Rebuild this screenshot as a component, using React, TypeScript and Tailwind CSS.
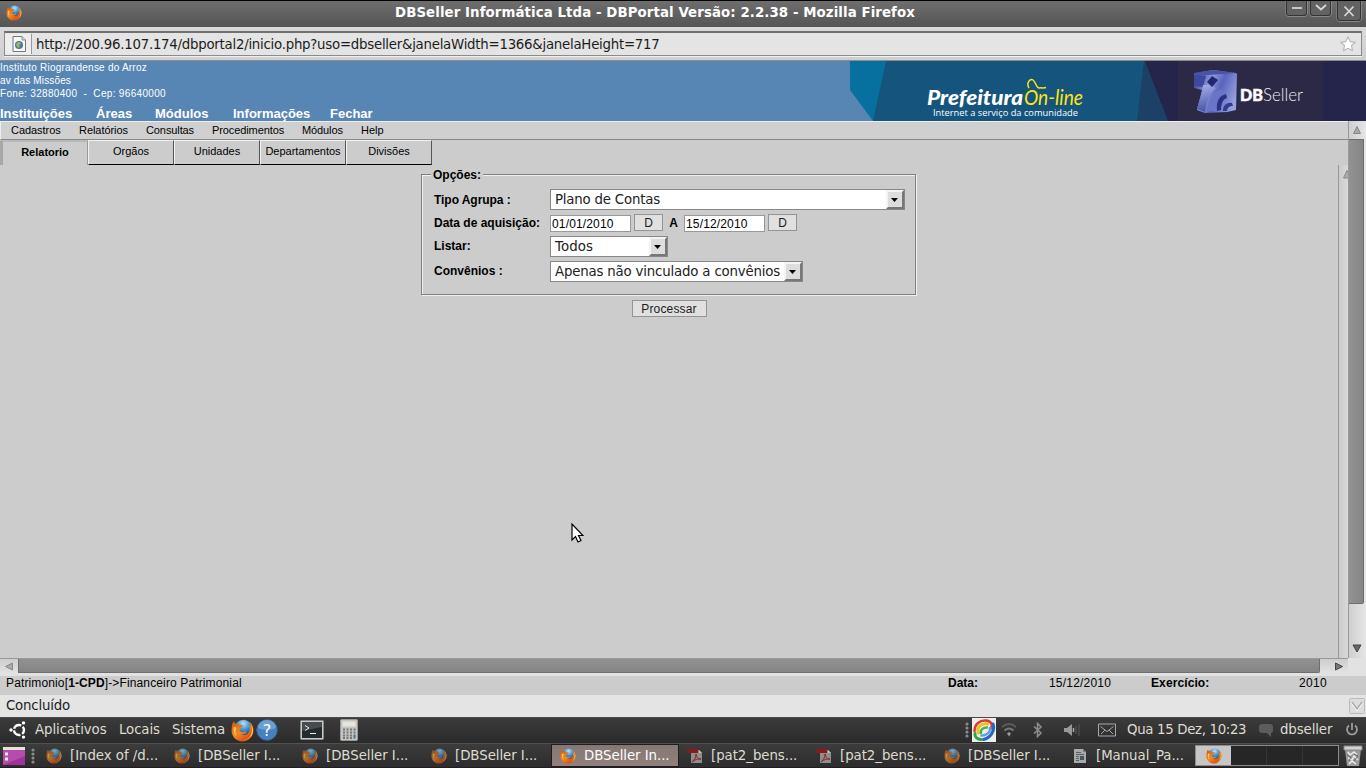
import React from "react";

function Firefox({ size = 16, dim = false }: { size?: number; dim?: boolean }) {
  return (
    <svg width={size} height={size} viewBox="0 0 16 16" className="shrink-0" opacity={dim ? 0.65 : 1}>
      <defs>
        <radialGradient id="ffGlobe" cx="0.5" cy="0.2" r="0.8">
          <stop offset="0" stopColor="#b5e4fa" />
          <stop offset="0.45" stopColor="#3b8ed0" />
          <stop offset="1" stopColor="#12266b" />
        </radialGradient>
        <linearGradient id="ffFox" x1="0" y1="0" x2="0.7" y2="1">
          <stop offset="0" stopColor="#d4521a" />
          <stop offset="0.55" stopColor="#f08a24" />
          <stop offset="1" stopColor="#d8420e" />
        </linearGradient>
      </defs>
      <circle cx="8.600" cy="7" r="6.400" fill="url(#ffGlobe)" />
      <path d="M1 3.200 2 1.600 3.200 3.400C4.400 3 5.300 3.300 6 4l2.400.4c.1 1.200-.9 1.600-1.700 2L5.900 8c.6 1 1.700 1.400 2.900 1 .9-.4 1.700-.3 2 .3-.8 1.200-2.300 1.700-3.900 1.300 2.200 1.300 5 .3 5.900-2 .5-1.600.3-3.200-.4-4.800 1 .6 1.300 1.200 1.500 2.100.1-1.500-.5-3-1.500-4.200 2.300 1.400 3.400 3.800 3.200 6.400-.3 4.200-3.600 7.500-7.700 7.500C3.600 15.600.4 12.200.4 8c0-1.700.2-3.300.6-4.800Z" fill="url(#ffFox)" />
      <path d="M14.400 5.200c1.200 4-1 8.700-5.400 9.600 3.300-.3 6.600-3.300 6.400-7.200-.1-.9-.5-1.700-1-2.400ZM2 5.600C1.300 8 2 10.500 3.600 12 2.800 9.800 3 7.600 4 6Z" fill="#ffce3d" />
    </svg>
  );
}

function Pdf() {
  return (
    <svg width="16" height="16" viewBox="0 0 16 16" className="shrink-0">
      <path d="M4 2h8l3 3v10H4z" fill="#8e8e8e" />
      <path d="m12 2 3 3h-3z" fill="#c0c0c0" />
      <path d="M0 1h11v4H0z" fill="#8b1a1f" />
      <path d="M5 14c2-2 4.500-5 4-8 .5 3.500 2.500 5.500 5 5-3-.5-6 .5-9 3Z" fill="none" stroke="#8b2226" />
    </svg>
  );
}

function Doc() {
  return (
    <svg width="16" height="16" viewBox="0 0 16 16" className="shrink-0">
      <path d="M2 1h9l3 3v11H2z" fill="#a9a9a9" />
      <path d="m11 1 3 3h-3z" fill="#747474" />
      <path d="M4 4.500h5M4 6.500h8M4 8.500h3M4 10.500h3M4 12.500h3" stroke="#606060" />
      <path d="M8 8h4v4H8z" fill="#3f566d" />
    </svg>
  );
}

function Dots({ n }: { n: number }) {
  return (
    <svg width="4" height="16" viewBox="0 0 4 16" className="shrink-0">
      {Array.from({ length: n }, (_, i) => (
        <circle key={i} cx="2" cy={2 + i * (12 / (n - 1))} r="1.600" fill="#8a8a8a" />
      ))}
    </svg>
  );
}

function Select({ text, width, spacing }: { text: string; width: string; spacing: string }) {
  return (
    <div className={`flex h-[21px] border border-[#888] bg-white ${width}`}>
      <span className={`flex-1 whitespace-nowrap pl-1 font-['DejaVu_Sans'] text-[13.33px] leading-[19px] text-[#222] ${spacing}`}>{text}</span>
      <span className="flex h-[19px] w-[18px] shrink-0 items-center justify-center border-2 border-b-[#777] border-l-[#f4f4f4] border-r-[#777] border-t-[#f4f4f4] bg-[#ddd] pr-px">
        <svg width="7" height="4" viewBox="0 0 7 4"><path d="M0 0h7L3.500 4z" fill="#000" /></svg>
      </span>
    </div>
  );
}

const btn = "border border-[#949494] bg-[#e0e0e0] text-center text-[12px] text-[#1c1c1c]";
const dateBox = "h-[17px] w-[81px] border border-[#999] bg-white pl-px text-[12px] leading-[16px] tracking-[0.15px]";

function WinButton({ kind, className }: { kind: string; className: string }) {
  return (
    <div className={`flex justify-center rounded-b-[3px] border border-t-0 border-[#333] bg-[#626262] shadow-[0_1px_0_#888,1px_0_0_#888,-1px_0_0_#777] ${className}`}>
      <svg width="12" height="12" viewBox="0 0 12 12" fill="none" stroke="#d8d8d8" strokeWidth="1.700">
        {kind === "min" && <path d="M1 7h10" />}
        {kind === "down" && <path d="m1 4 5 4.500L11 4" />}
        {kind === "close" && <path d="m1.500 1.500 9 9.500M10.500 1.500l-9 9.500" />}
      </svg>
    </div>
  );
}

function Titlebar() {
  return (
    <div className="flex h-[27px] border-t border-black bg-linear-to-b from-[#6e6e6e] to-[#555]">
      <div className="w-[395px] pl-1.5 pt-1"><Firefox /></div>
      <div className="w-[891px] whitespace-nowrap font-['DejaVu_Sans'] text-[13.33px] font-bold leading-[24px] tracking-[0.09px] text-white">
        DBSeller Informática Ltda - DBPortal Versão: 2.2.38 - Mozilla Firefox
      </div>
      <WinButton kind="min" className="h-[15px] w-[21px]" />
      <WinButton kind="down" className="ml-[3px] h-[15px] w-[21px]" />
      <WinButton kind="close" className="ml-[6px] h-[20px] w-[24px] items-center" />
    </div>
  );
}

function Urlbar() {
  return (
    <div className="h-[34px] border-b border-[#8c8c8c] bg-linear-to-b from-[#dadada] to-[#cfcfcf] px-1 pt-1">
      <div className="flex h-[25px] items-center border border-t-2 border-[#8b8b8b] border-t-[#707070] bg-[#e4e4e4] shadow-[0_1px_0_#f2f2f2]">
        <div className="flex h-[20px] w-[27px] items-center justify-center border-r border-[#999] bg-[#eee] pl-px">
          <svg width="14" height="16" viewBox="0 0 14 16">
            <path d="M1 .5h9l3.500 3.500v11.500H1z" fill="#f7f7f7" stroke="#777" />
            <path d="M10 .5V4h3.500" fill="#ccc" stroke="#999" />
            <circle cx="7" cy="9" r="4" fill="#4778a8" />
            <path d="M5 6.500 8 6l1 2-2 1 1 2-2 1-2-3z" fill="#a0b84c" />
          </svg>
        </div>
        <span className="flex-1 whitespace-nowrap pl-[4px] pt-[2px] font-['DejaVu_Sans'] text-[13.33px] leading-[22px] tracking-[-0.25px] text-[#1c1c1c]">
          http://200.96.107.174/dbportal2/inicio.php?uso=dbseller&amp;janelaWidth=1366&amp;janelaHeight=717
        </span>
        <svg width="18" height="18" viewBox="0 0 18 18" className="mr-[4px]">
          <path d="m9 1.800 2.200 4.700 5.100.6-3.800 3.500 1 5.100L9 13.200l-4.500 2.500 1-5.100L1.700 7.100l5.100-.6z" fill="#fff" stroke="#bdbdbd" strokeWidth="1.300" strokeLinejoin="round" />
        </svg>
      </div>
    </div>
  );
}

function Banner() {
  return (
    <svg width="516" height="60" viewBox="0 0 516 60" className="shrink-0">
      <defs>
        <linearGradient id="cube" x1="0" x2="1" y1="0.2" y2="0.6">
          <stop offset="0" stopColor="#343d94" />
          <stop offset="0.35" stopColor="#8f9adb" />
          <stop offset="0.6" stopColor="#5964bd" />
          <stop offset="1" stopColor="#98a1dd" />
        </linearGradient>
        <linearGradient id="cubeSide" x1="0" x2="0.2" y1="0" y2="1">
          <stop offset="0" stopColor="#a9b3ea" />
          <stop offset="1" stopColor="#4a54ab" />
        </linearGradient>
      </defs>
      <path d="M0 0h516v60H23L0 29z" fill="#08709f" />
      <path d="M36 0h480v60H23z" fill="#15547c" />
      <path d="M294 0h222v60H287z" fill="#1d4166" />
      <path d="M295 0h221v60H318z" fill="#25244a" />
      <path d="M328 0h145v60H328z" fill="#2b2946" />
      <text x="77" y="43.500" textLength="96" lengthAdjust="spacingAndGlyphs" fontFamily="Lato" fontSize="20" fontWeight="900" fontStyle="italic" fill="#fff">Prefeitura</text>
      <text x="174" y="43.500" textLength="59" lengthAdjust="spacingAndGlyphs" fontFamily="Lato" fontSize="21" fontStyle="italic" fill="#ffe512">On-line</text>
      <path d="M179 27c-3-5 1-10 4-8 3 2 3 8 6 8 3-.5 4 .5 7-.5" fill="none" stroke="#ffe512" strokeWidth="1.500" />
      <text x="83" y="54.500" textLength="145" lengthAdjust="spacingAndGlyphs" fontFamily="Open Sans" fontSize="9.500" fill="#fff">Internet a serviço da comunidade</text>
      <path d="m344 12 19-3 23 3 1 1-1 36-9 2-22 1-8-3 5-20-8-2z" fill="url(#cube)" />
      <path d="m344 12 19-3 23 3-14 1-28 2z" fill="#4a53a8" />
      <path d="m344 14 12 1-3 11-9-1z" fill="#3f489e" />
      <path d="M353 24c-1 10-4 16-6 24l8 3c1-10 4-18 11-24l-7-3Z" fill="url(#cubeSide)" />
      <path d="m357 21 5-6 6 4-6 7z" fill="#22276f" />
      <path d="M358 50c0-9 3-17 11-21 3-2 6 1 7 4-6 2-9 7-9 17z" fill="#6a75c9" />
      <path d="M367 50c-1-10 2-15 9-17l1 4c-4 1-6 5-6 12z" fill="#2a3182" />
      <path d="M373 50c0-5 3-9 9-8l1 3c-4 0-6 2-6 5z" fill="#333b8f" />
      <text x="390" y="39.500" textLength="23" lengthAdjust="spacingAndGlyphs" fontFamily="Lato" fontSize="17" fontWeight="900" fill="#fff" stroke="#fff" strokeWidth="0.500">DB</text>
      <text x="413" y="39.500" textLength="40" lengthAdjust="spacingAndGlyphs" fontFamily="Lato" fontSize="18" fontWeight="300" fill="#ececf2">Seller</text>
    </svg>
  );
}

function Header() {
  return (
    <div className="flex h-[60px] bg-[#5786b4] text-white">
      <div className="w-[850px] whitespace-nowrap">
        <div className="h-[44px] text-[10px] leading-[13px]">
          <div className="tracking-[0.22px]">Instituto Riograndense do Arroz</div>
          <div className="tracking-[0.15px]">av das Missões</div>
          <div className="whitespace-pre tracking-[0.32px]">Fone: 32880400  -  Cep: 96640000</div>
        </div>
        <div className="flex text-[13px] font-bold leading-[17px]">
          <span className="w-[96px]">Instituições</span>
          <span className="w-[59px]">Áreas</span>
          <span className="w-[78px]">Módulos</span>
          <span className="w-[97px]">Informações</span>
          <span>Fechar</span>
        </div>
      </div>
      <Banner />
    </div>
  );
}

function Menubar() {
  return (
    <div className="flex h-[19px] shrink-0 whitespace-nowrap border-b border-l border-t border-b-[#888] border-l-[#eee] border-t-[#eee] bg-[#d0d0d0] pl-[10px] text-[11px] leading-[17px] text-black">
      <span className="w-[68px] tracking-[-0.05px]">Cadastros</span>
      <span className="w-[67px] tracking-[-0.05px]">Relatórios</span>
      <span className="w-[66px] tracking-[-0.1px]">Consultas</span>
      <span className="w-[90px] tracking-[-0.1px]">Procedimentos</span>
      <span className="w-[59px] tracking-[-0.1px]">Módulos</span>
      <span>Help</span>
    </div>
  );
}

function Tabs() {
  return (
    <div className="flex h-[25px] text-center text-[11px] text-black">
      <div className="w-[88px] border-l-[3px] border-r border-t-2 border-l-[#a8a8a8] border-r-[#999] border-t-[#b8b8b8] font-bold leading-[21px]">Relatorio</div>
      {["Orgãos", "Unidades", "Departamentos", "Divisões"].map((t) => (
        <div key={t} className="w-[86px] whitespace-nowrap border border-b-black border-l-[#f2f2f2] border-r-[#555] border-t-[#f2f2f2] leading-[21px]">{t}</div>
      ))}
    </div>
  );
}

function Form() {
  return (
    <div className="flex flex-1 flex-col items-center">
      <fieldset className="mr-px h-[130px] w-[495px] border border-[#808080] pl-[9px] shadow-[inset_1px_1px_0_#f0f0f0,1px_1px_0_#f0f0f0]">
        <legend className="bg-[#ccc] px-[2px] pt-px text-[12px] font-bold leading-[18px] text-black">Opções:</legend>
        <div className="grid grid-cols-[116px_1fr] pl-[3px] text-[12px] text-black">
          <b className="h-[25px] whitespace-nowrap pt-[7px] leading-[18px] tracking-[-0.05px]">Tipo Agrupa :</b>
          <div className="h-[25px] pt-[5px]"><Select text="Plano de Contas" width="w-[355px]" spacing="tracking-[-0.2px]" /></div>
          <b className="h-[22px] whitespace-nowrap pt-[5px] leading-[18px]">Data de aquisição:</b>
          <div className="flex h-[22px] items-start pt-[6px]">
            <span className={dateBox}>01/01/2010</span>
            <span className={`-mt-px ml-[3px] h-[17px] w-[29px] leading-[17px] ${btn}`}>D</span>
            <b className="w-[21px] text-center leading-[17px]">A</b>
            <span className={dateBox}>15/12/2010</span>
            <span className={`-mt-px ml-[3px] h-[17px] w-[29px] leading-[17px] ${btn}`}>D</span>
          </div>
          <b className="h-[25px] pt-[6px] leading-[18px]">Listar:</b>
          <div className="h-[25px] pt-[5px]"><Select text="Todos" width="w-[118px]" spacing="tracking-[0.1px]" /></div>
          <b className="h-[27px] pt-[6px] leading-[18px]">Convênios :</b>
          <div className="h-[27px] pt-[5px]"><Select text="Apenas não vinculado a convênios" width="w-[253px]" spacing="tracking-[-0.18px]" /></div>
        </div>
      </fieldset>
      <button className={`mt-[5px] h-[17px] w-[75px] leading-[16px] tracking-[0.15px] ${btn}`}>Processar</button>
    </div>
  );
}

function Scrollbars() {
  return (
    <div className="flex w-[18px] flex-col border-l border-[#999] bg-linear-to-r from-[#cfcfcf] to-[#e6e6e6]">
      <svg width="17" height="18" viewBox="0 0 17 18"><path d="M4.500 12.500 8 5.500 11.500 12.500z" fill="#a8a8a8" stroke="#888" /></svg>
      <div className="h-[465px] w-[15px] rounded-br-[2px] border border-l-0 border-[#6e6e6e] bg-linear-to-r from-[#929292] to-[#858585]" />
      <div className="flex-1" />
      <svg width="17" height="18" viewBox="0 0 17 18"><path d="M4 5h8L8 12z" fill="#666" stroke="#444" /></svg>
    </div>
  );
}

function HScroll() {
  return (
    <div className="flex h-[18px] border-b-[3px] border-[#e2e2e2] bg-[#e2e2e2]">
      <div className="flex h-[15px] w-[1348px] border-t border-[#999] bg-linear-to-b from-[#cdcdcd] to-[#e2e2e2]">
        <svg width="18" height="14" viewBox="0 0 18 14"><path d="M12.500 4v7L5.500 7.500z" fill="#aaa" stroke="#888" /></svg>
        <div className="h-[14px] w-[1302px] rounded-br-[2px] border border-t-0 border-[#6e6e6e] bg-linear-to-b from-[#919191] to-[#858585]" />
        <svg width="28" height="14" viewBox="0 0 28 14"><path d="M15.500 4v7l7-3.500z" fill="#777" stroke="#444" /></svg>
      </div>
    </div>
  );
}

function StatusRows() {
  return (
    <>
      <div className="flex h-[19px] whitespace-nowrap bg-[#ccc] pl-[6px] text-[12px] leading-[15px] text-black">
        <span className="w-[942px] tracking-[0.13px]">Patrimonio[<b>1-CPD</b>]-&gt;Financeiro Patrimonial</span>
        <b className="w-[101px]">Data:</b>
        <span className="w-[102px] tracking-[0.2px]">15/12/2010</span>
        <b className="w-[148px] tracking-[0.1px]">Exercício:</b>
        <span className="tracking-[0.3px]">2010</span>
      </div>
      <div className="flex h-[22px] items-center justify-between bg-[#e4e4e4] pl-[6px] pr-px font-['DejaVu_Sans'] text-[13.33px] leading-[20px] tracking-[-0.2px] text-[#222]">
        <span>Concluído</span>
        <svg width="16" height="16" viewBox="0 0 16 16" fill="none">
          <rect x=".5" y=".5" width="15" height="15" rx="1" fill="#ddd" stroke="#bbb" />
          <path d="m3 5 5 7L13 5" stroke="#fff" strokeWidth="2" />
          <path d="m3 4 5 7L13 4" stroke="#aaa" strokeWidth="1.500" />
        </svg>
      </div>
    </>
  );
}

function Panel() {
  return (
    <div className="flex h-[26px] items-center whitespace-nowrap border-t border-[#4a4a4a] bg-linear-to-b from-[#3b3b3b] to-[#2b2b2b] pb-px font-['DejaVu_Sans'] text-[13.33px] leading-[20px] text-[#dfdbd2]">
      <svg width="18" height="18" viewBox="0 0 18 18" className="ml-[9px] mr-[8px]" fill="none">
        <circle cx="10" cy="9" r="5" stroke="#fff" strokeWidth="2.400" strokeDasharray="8.700 1.770" strokeDashoffset="4.350" />
        <circle cx="2" cy="9" r="1.700" fill="#fff" />
        <circle cx="14.500" cy="1.900" r="1.700" fill="#fff" />
        <circle cx="14.500" cy="16.100" r="1.700" fill="#fff" />
      </svg>
      <span className="-mt-px w-[84px] tracking-[-0.08px]">Aplicativos</span>
      <span className="-mt-px w-[53px] tracking-[-0.1px]">Locais</span>
      <span className="-mt-px w-[59px] tracking-[-0.1px]">Sistema</span>
      <Firefox size={23} />
      <svg width="22" height="22" viewBox="0 0 22 22" className="ml-[2px] mr-[22px]">
        <circle cx="11" cy="11" r="10.300" fill="#4681bd" stroke="#3465a4" />
        <path d="M2 9a9 8 0 0 1 18 0q-9 4-18 0Z" fill="#6ba0d2" />
        <text x="11" y="17" textAnchor="middle" fontSize="16" fontFamily="DejaVu Sans" fill="#fff">?</text>
      </svg>
      <svg width="24" height="20" viewBox="0 0 24 20" className="mr-[16px]">
        <rect x=".5" y=".5" width="23" height="19" rx="1" fill="#c8c8c8" stroke="#888" />
        <rect x="2" y="2" width="20" height="16" fill="#242b2c" />
        <path d="M2 2h20v5L2 11z" fill="#464d4e" />
        <path d="m5 5.500 4 2.500-4 2.500M10 13.500h6" fill="none" stroke="#eee" />
      </svg>
      <svg width="18" height="22" viewBox="0 0 18 22">
        <rect x=".5" y=".5" width="17" height="21" rx="1" fill="#c4c4c0" stroke="#999" />
        <rect x="2.500" y="2.500" width="13" height="5" fill="#e6e6df" />
        <path d="M3 10.500h2m1.500 0h2m1.500 0h2m1.500 0h2M3 13.500h2m1.500 0h2m1.500 0h2m1.500 0h2M3 16.500h2m1.500 0h2m1.500 0h2M3 19h2m1.500 0h2m1.500 0h2" stroke="#777" strokeWidth="2" />
        <path d="M13.500 15.500h2v4h-2z" fill="#3e7890" />
      </svg>
      <div className="flex-1" />
      <Dots n={4} />
      <svg width="24" height="24" viewBox="0 0 24 24" className="ml-[3px] mr-[5px] bg-[#eee]" fill="none" strokeLinecap="round">
        <path d="M2.500 13C2.500 6 8 2 14 2.500c5 .5 7 4 5 8" stroke="#de3a2c" strokeWidth="2.500" />
        <path d="M6.500 15C4 10 9 5 15.500 6" stroke="#f3bf18" strokeWidth="3" />
        <path d="M21 6c2.500 7-3 14-9.500 15.500" stroke="#2267c5" strokeWidth="3" />
        <path d="M18 10c.5 4-3.500 8-8.500 7.500" stroke="#5d9fe0" strokeWidth="2.500" />
        <path d="M9 21.500c-4.500-.5-6.500-3-6-6" stroke="#31a347" strokeWidth="3" />
        <path d="M9 15c-1-3 2-5.500 6-5.500" stroke="#47b64c" strokeWidth="2.500" />
      </svg>
      <svg width="16" height="16" viewBox="0 0 16 16" className="mr-[16px]" fill="none" stroke="#5c5c5c" strokeWidth="2">
        <path d="M1 5q7-6 14 0" /><path d="M3.500 8.500q4.500-4 9 0" stroke="#777" /><path d="m6 11.500 2-1.500 2 1.500-2 3z" fill="#999" stroke="none" />
      </svg>
      <svg width="10" height="16" viewBox="0 0 10 16" className="mr-[21px]" fill="none" stroke="#8c8c8c" strokeWidth="1.600"><path d="m1 4.500 7 6.500-3.500 3.500v-13L8 5l-7 6.500" /></svg>
      <svg width="16" height="16" viewBox="0 0 16 16" className="mr-[18px]"><path d="M0 6h3l5-4v12l-5-4H0z" fill="#999" /><path d="M9.500 6v4" stroke="#aaa" strokeWidth="1.500" /><path d="M12 4v8M15 2v12" stroke="#4d4d4d" strokeWidth="1.500" /></svg>
      <svg width="18" height="14" viewBox="0 0 18 14" className="mr-[11px]" fill="none" stroke="#a8a8a8"><path d="M.5 1h17v12H.5zM2.500 3.500 9 8.500l6.500-5M3 11l4-4M15 11l-4-4" /></svg>
      <span className="-mt-px w-[131px] tracking-[-0.33px]">Qua 15 Dez, 10:23</span>
      <svg width="16" height="14" viewBox="0 0 16 14" className="mr-[6px]"><path d="M4 1h8q3 0 3 3v3q0 3-2 3v4l-4-4H4Q1 10 1 7V4q0-3 3-3Z" fill="#5c5c5c" /></svg>
      <span className="-mt-px w-[65px] tracking-[-0.1px]">dbseller</span>
      <svg width="14" height="14" viewBox="0 0 14 14" className="mr-[7px]" fill="none" stroke="#a0a0a0" strokeWidth="1.700"><path d="M4 2.500a5 5 0 1 0 6 0M7 0v7" /></svg>
    </div>
  );
}

const tasks = [
  { icon: "ff", text: "[Index of /d...", w: "w-[128px]" },
  { icon: "ff", text: "[DBSeller I...", w: "w-[128px]" },
  { icon: "ff", text: "[DBSeller I...", w: "w-[129px]" },
  { icon: "ff", text: "[DBSeller I...", w: "w-[120px]" },
  { icon: "active", text: "DBSeller In...", w: "" },
  { icon: "pdf", text: "[pat2_bens...", w: "w-[129px]" },
  { icon: "pdf", text: "[pat2_bens...", w: "w-[128px]" },
  { icon: "ff", text: "[DBSeller I...", w: "w-[128px]" },
  { icon: "doc", text: "[Manual_Pa...", w: "w-[123px]" },
];

function Taskbar() {
  return (
    <div className="flex h-[25px] items-center whitespace-nowrap border-b border-t border-b-[#241b24] border-t-[#505050] bg-linear-to-b from-[#3c3c3c] to-[#2c2c2c] font-['DejaVu_Sans'] text-[13.33px] leading-[20px] tracking-[-0.05px] text-[#dfdbd2]">
      <svg width="22" height="18" viewBox="0 0 22 18" className="ml-[3px] shrink-0">
        <rect width="22" height="18" fill="#b54cae" /><path d="M0 0h22v3H0z" fill="#e6e2d8" /><path d="M0 18 22 9v9H0z" fill="#9c349a" /><path d="M2 5.500h3v3H2zM2 10.500h3v3H2z" fill="#eee" />
      </svg>
      <div className="ml-[6px] mr-[11px] flex"><Dots n={4} /></div>
      {tasks.map((t, i) =>
        t.icon === "active" ? (
          <div key={i} className="mr-[8px] flex h-[23px] w-[128px] shrink-0 items-center border border-[#1e1e1e] bg-linear-to-b from-[#857874] to-[#91807c] pl-[8px] text-white">
            <Firefox />
            <span className="pl-[8px] pt-px">{t.text}</span>
          </div>
        ) : (
          <div key={i} className={`flex shrink-0 items-center ${t.w}`}>
            {t.icon === "ff" ? <Firefox dim /> : t.icon === "pdf" ? <Pdf /> : <Doc />}
            <span className="pl-[8px]">{t.text}</span>
          </div>
        ),
      )}
      <div className="flex h-[21px] w-[144px] shrink-0 border border-[#8c8c8c] bg-[#262626]">
        <div className="flex w-[35px] items-center justify-center bg-[#c8c5c5]"><Firefox /></div>
        <div className="w-[36px] border-r border-[#353535]" />
        <div className="w-[36px] border-r border-[#353535]" />
      </div>
      <svg width="20" height="22" viewBox="0 0 20 22" className="ml-[4px] shrink-0">
        <path d="M2 4h16l-2 17H4z" fill="#9b9b9b" /><path d="M1 1h18v4H1z" fill="#d2d2d2" stroke="#888" />
        <path d="m5 7 2 3 4-3 3 3M5 13l4 2 2-4 4 4M6 19l3-3 4 3" fill="none" stroke="#eee" strokeWidth="1.500" /><path d="m4 10 4 2-2 4m5-7 4 2-4 5" stroke="#666" fill="none" />
      </svg>
    </div>
  );
}

export default function App() {
  return (
    <div className="relative flex h-[768px] w-[1366px] flex-col overflow-hidden bg-[#ccc] font-['Liberation_Sans',sans-serif]">
      <Titlebar />
      <Urlbar />
      <Header />
      <div className="flex h-[537px]">
        <div className="flex w-[1348px] flex-col">
          <Menubar />
          <Tabs />
          <div className="flex flex-1">
            <div className="flex w-[1338px] flex-col"><Form /></div>
            <div className="w-[10px] overflow-hidden border-l border-[#999] bg-linear-to-r from-[#cbcbcb] to-[#d9d9d9]">
              <svg width="16" height="18" viewBox="0 0 16 18"><path d="M4.500 13 8 5.500 11.500 13z" fill="#aaa" stroke="#888" /></svg>
            </div>
          </div>
        </div>
        <Scrollbars />
      </div>
      <HScroll />
      <StatusRows />
      <Panel />
      <Taskbar />
      <svg width="13" height="21" viewBox="0 0 13 21" className="absolute left-[571px] top-[523px]">
        <path d="M1 1v16l3.500-3.500L7 19l3-1.500L7.500 12.500H12z" fill="#fff" stroke="#000" strokeWidth="1.200" />
      </svg>
    </div>
  );
}
